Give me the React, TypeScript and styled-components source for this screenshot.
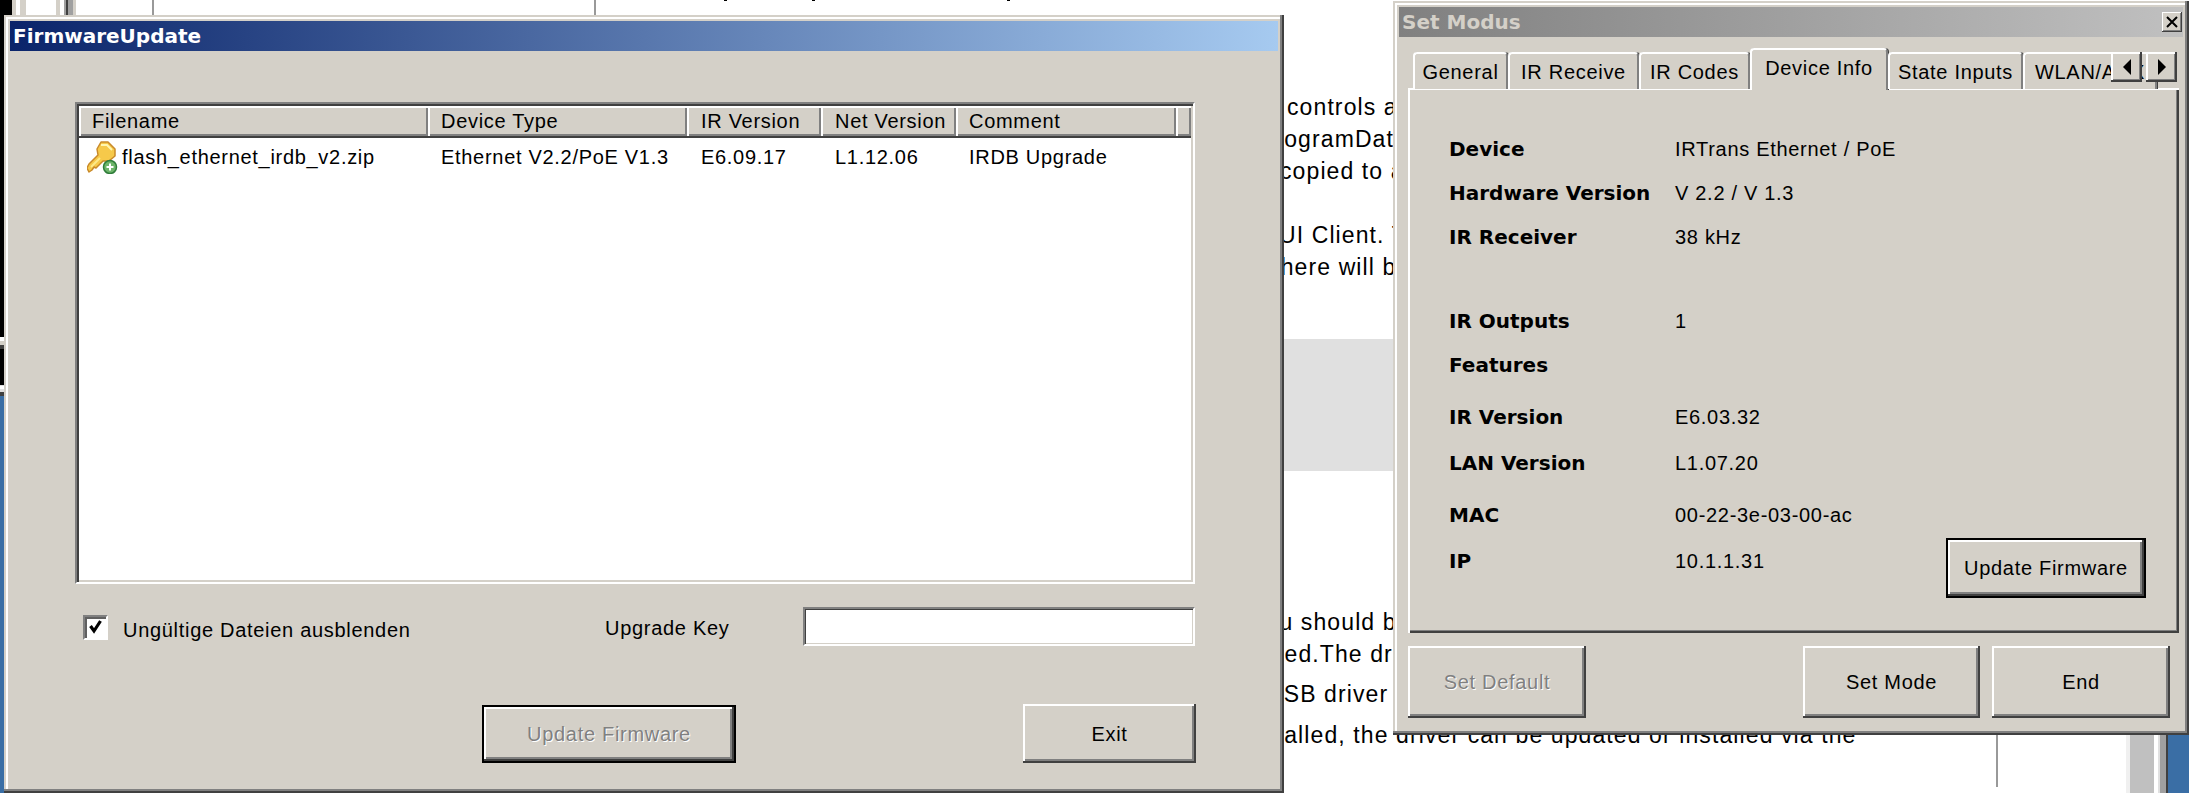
import React from 'react';
import styled, { createGlobalStyle } from 'styled-components';

const FACE = '#d4d0c8';

const GlobalStyle = createGlobalStyle`
  html, body {
    margin: 0;
    padding: 0;
    width: 2189px;
    height: 793px;
    overflow: hidden;
    background: #fff;
  }
  * { box-sizing: border-box; }
`;

const Desktop = styled.div`
  position: relative;
  width: 2189px;
  height: 793px;
  overflow: hidden;
  background: #fff;
  font-family: "Liberation Sans", Arial, sans-serif;
  font-size: 20px;
  letter-spacing: 0.7px;
  color: #000;
`;

// bits of other windows that peek out behind the two dialogs
const BackEdge = styled.div<{ $x: number; $y: number; $w: number; $h: number; $c: string }>`
  position: absolute;
  left: ${p => p.$x}px;
  top: ${p => p.$y}px;
  width: ${p => p.$w}px;
  height: ${p => p.$h}px;
  background: ${p => p.$c};
`;

const Doc = styled.div`
  font-size: 23px;
  letter-spacing: 1.1px;
  padding-top: 91px;
  white-space: nowrap;
`;

const DocLine = styled.div<{ $x: number; $gap?: number }>`
  height: 32px;
  line-height: 32px;
  margin-left: ${p => p.$x}px;
  margin-top: ${p => p.$gap ?? 0}px;
`;

const DocBand = styled.div`
  height: 132px;
  margin-top: 56px;
  background: #e0e0e0;
`;

const Win = styled.div<{ $x: number; $y: number; $w: number; $h: number }>`
  position: absolute;
  left: ${p => p.$x}px;
  top: ${p => p.$y}px;
  width: ${p => p.$w}px;
  height: ${p => p.$h}px;
  background: ${FACE};
  padding: 6px 6px 4px 6px;
  box-shadow:
    inset -2px -2px #404040,
    inset -4px -4px #808080,
    inset 2px 2px ${FACE},
    inset 4px 4px #fff;
`;

const TitleBar = styled.div<{ $active?: boolean }>`
  height: 30px;
  display: flex;
  align-items: center;
  justify-content: space-between;
  padding: 0 1px 0 3px;
  font-family: "DejaVu Sans", sans-serif;
  font-weight: 700;
  font-size: 20px;
  letter-spacing: 0;
  color: ${p => (p.$active ? '#fff' : FACE)};
  background: ${p =>
    p.$active
      ? 'linear-gradient(90deg, #0a246a, #a6caf0)'
      : 'linear-gradient(90deg, #808080, #c0c0c0)'};
`;

const CloseButton = styled.div`
  width: 20px;
  height: 20px;
  background: ${FACE};
  display: flex;
  align-items: center;
  justify-content: center;
  box-shadow: inset -1px -1px #404040, inset 1px 1px #fff, inset -2px -2px #808080;
`;

const FirmwareBody = styled.div`
  padding: 51px 0 0 65px;
`;

const ListView = styled.div`
  width: 1120px;
  height: 482px;
  background: #fff;
  border-style: solid;
  border-width: 2px;
  border-color: #808080 #fff #fff #808080;
  box-shadow: inset 2px 2px #404040, inset -2px -2px ${FACE};
  padding: 2px;
`;

const ListHeader = styled.div`
  display: flex;
  height: 32px;
  border-bottom: 2px solid #404040;
`;

const HeaderCell = styled.div<{ $w?: number; $pad?: number }>`
  flex: ${p => (p.$w ? `0 0 ${p.$w}px` : 1)};
  padding-left: ${p => p.$pad ?? 0}px;
  line-height: 31px;
  white-space: nowrap;
  background: ${FACE};
  box-shadow: inset 2px 2px #fff, inset -2px -2px #808080;
`;

const ListRow = styled.div`
  display: flex;
  height: 38px;
  align-items: center;
`;

const RowCell = styled.div<{ $w: number; $pad: number }>`
  flex: 0 0 ${p => p.$w}px;
  padding-left: ${p => p.$pad}px;
  display: flex;
  align-items: center;
  white-space: nowrap;
`;

const FileName = styled.span`
  margin-left: 4px;
`;

const OptionRow = styled.div`
  display: grid;
  grid-template-columns: 530px 198px 392px;
  align-items: center;
  height: 39px;
  margin-top: 23px;
`;

const CheckGroup = styled.label`
  display: flex;
  align-items: center;
  gap: 15px;
  padding: 1px 0 0 8px;
`;

const CheckLabel = styled.span`
  padding-top: 6px;
`;

const KeyLabel = styled.span`
  padding-top: 4px;
`;

const CheckBox = styled.span`
  width: 25px;
  height: 25px;
  display: flex;
  align-items: center;
  justify-content: center;
  background: #fff;
  border-style: solid;
  border-width: 2px;
  border-color: #808080 #fff #fff #808080;
  box-shadow: inset 2px 2px #606060;
`;

const KeyInput = styled.div`
  height: 39px;
  background: #fff;
  border-style: solid;
  border-width: 2px;
  border-color: #808080 #fff #fff #808080;
  box-shadow: inset 1px 1px #404040, inset -1px -1px ${FACE};
`;

const FirmwareFooter = styled.div`
  display: flex;
  align-items: center;
  gap: 287px;
  margin-top: 58px;
  padding-left: 407px;
`;

const Button = styled.div<{ $w: number; $h: number; $default?: boolean; $disabled?: boolean }>`
  flex: 0 0 ${p => p.$w}px;
  width: ${p => p.$w}px;
  height: ${p => p.$h}px;
  display: flex;
  align-items: center;
  justify-content: center;
  padding-top: 1px;
  background: ${FACE};
  border: ${p => (p.$default ? '2px solid #000' : 'none')};
  box-shadow: inset -2px -2px #404040, inset 2px 2px #fff, inset -4px -4px #808080;
  color: ${p => (p.$disabled ? '#808080' : '#000')};
  text-shadow: ${p => (p.$disabled ? '1px 1px 0 #fff' : 'none')};
`;

const ModeBody = styled.div`
  padding: 0 0 0 9px;
`;

const TabArea = styled.div`
  position: relative;
  width: 771px;
  height: 42px;
  margin-top: 11px;
  z-index: 1;
`;

const TabStrip = styled.div`
  display: flex;
  align-items: flex-end;
  height: 42px;
  padding-left: 5px;
  overflow: hidden;
`;

const Tab = styled.div<{ $w: number; $active?: boolean }>`
  flex: 0 0 ${p => p.$w}px;
  height: ${p => (p.$active ? 42 : 37)}px;
  margin-bottom: ${p => (p.$active ? 0 : 1)}px;
  padding-top: 7px;
  text-align: center;
  white-space: nowrap;
  overflow: hidden;
  background: ${FACE};
  border-radius: 4px 4px 0 0;
  border-top: 2px solid #fff;
  border-left: 2px solid #fff;
  border-right: 2px solid #808080;
  box-shadow: 1px 0 #404040;
`;

const TabScroller = styled.div`
  position: absolute;
  right: 2px;
  top: 4px;
  display: flex;
  gap: 4px;
`;

const ScrollButton = styled.div`
  width: 31px;
  height: 30px;
  display: flex;
  align-items: center;
  justify-content: center;
  background: ${FACE};
  box-shadow: inset -2px -2px #404040, inset 2px 2px #fff, inset -3px -3px #808080;
`;

const TabPanel = styled.div`
  display: flex;
  width: 771px;
  height: 545px;
  margin-top: -2px;
  padding: 49px 0 0 41px;
  box-shadow: inset 2px 2px #fff, inset -2px -2px #404040, inset -3px -3px #808080;
`;

const InfoList = styled.div`
  flex: 1;
`;

const InfoRow = styled.div<{ $gap: number }>`
  display: grid;
  grid-template-columns: 226px 1fr;
  height: 24px;
  line-height: 24px;
  margin-top: ${p => p.$gap}px;
  white-space: nowrap;
`;

const InfoLabel = styled.span`
  font-family: "DejaVu Sans", sans-serif;
  font-weight: 700;
  font-size: 20px;
  letter-spacing: 0;
`;

const PanelButton = styled.div`
  align-self: flex-end;
  margin: 0 33px 35px 0;
`;

const ModeFooter = styled.div`
  display: flex;
  width: 762px;
  margin-top: 13px;
  gap: 12px;
`;

const FooterSpacer = styled.div`
  flex: 1;
`;

const columns = [
  { label: 'Filename', w: 349, pad: 13 },
  { label: 'Device Type', w: 259, pad: 13 },
  { label: 'IR Version', w: 134, pad: 14 },
  { label: 'Net Version', w: 135, pad: 14 },
  { label: 'Comment', w: 220, pad: 13 },
];

const tabs = [
  { label: 'General', w: 95 },
  { label: 'IR Receive', w: 131 },
  { label: 'IR Codes', w: 111 },
  { label: 'Device Info', w: 138, active: true },
  { label: 'State Inputs', w: 135 },
  { label: 'WLAN/AUX', w: 134 },
];

const infoRows = [
  { label: 'Device', value: 'IRTrans Ethernet / PoE', gap: 0 },
  { label: 'Hardware Version', value: 'V 2.2 / V 1.3', gap: 20 },
  { label: 'IR Receiver', value: '38 kHz', gap: 20 },
  { label: 'IR Outputs', value: '1', gap: 60 },
  { label: 'Features', value: '', gap: 20 },
  { label: 'IR Version', value: 'E6.03.32', gap: 28 },
  { label: 'LAN Version', value: 'L1.07.20', gap: 22 },
  { label: 'MAC', value: '00-22-3e-03-00-ac', gap: 28 },
  { label: 'IP', value: '10.1.1.31', gap: 22 },
];

const backEdges = [
  { x: 0, y: 0, w: 4, h: 337, c: '#000' },
  { x: 0, y: 337, w: 4, h: 4, c: '#fff' },
  { x: 0, y: 341, w: 4, h: 4, c: FACE },
  { x: 0, y: 345, w: 4, h: 4, c: '#404040' },
  { x: 0, y: 349, w: 4, h: 36, c: '#000' },
  { x: 0, y: 386, w: 4, h: 3, c: '#fff' },
  { x: 0, y: 392, w: 4, h: 4, c: '#404040' },
  { x: 0, y: 396, w: 4, h: 397, c: '#3a6ea5' },
  { x: 4, y: 0, w: 8, h: 15, c: '#000' },
  { x: 12, y: 0, w: 4, h: 15, c: FACE },
  { x: 20, y: 0, w: 6, h: 15, c: FACE },
  { x: 56, y: 0, w: 4, h: 15, c: FACE },
  { x: 64, y: 0, w: 2, h: 15, c: '#a0a0a0' },
  { x: 66, y: 0, w: 2, h: 15, c: '#404040' },
  { x: 68, y: 0, w: 5, h: 15, c: '#a0a0a0' },
  { x: 73, y: 0, w: 3, h: 15, c: FACE },
  { x: 152, y: 0, w: 2, h: 15, c: '#999' },
  { x: 594, y: 0, w: 2, h: 15, c: '#999' },
  { x: 724, y: 0, w: 3, h: 1, c: '#000' },
  { x: 812, y: 0, w: 3, h: 1, c: '#000' },
  { x: 1007, y: 0, w: 3, h: 1, c: '#000' },
  { x: 1996, y: 735, w: 2, h: 52, c: '#999' },
  { x: 2126, y: 735, w: 4, h: 58, c: '#f0f0f0' },
  { x: 2130, y: 735, w: 24, h: 58, c: '#c0c0c0' },
  { x: 2158, y: 735, w: 2, h: 58, c: '#e0e0e0' },
  { x: 2160, y: 735, w: 6, h: 58, c: '#a0a0a0' },
  { x: 2166, y: 735, w: 2, h: 58, c: '#404040' },
  { x: 2168, y: 735, w: 21, h: 58, c: '#3a6ea5' },
];

const KeyIcon = () => (
  <svg width="31" height="33" viewBox="0 0 31 33" style={{ flex: '0 0 31px', marginLeft: -4 }}>
    <path
      d="M14 1 L21 1 L28 8 L28 15 L22 20 L16 20 L9 27 L7 26 L5 29 L2 31 L0 27 L2 23 L11 14 L10 8 Z"
      fill="#f6c94a"
      stroke="#c98a2a"
      strokeWidth="1.5"
      strokeLinejoin="round"
    />
    <path d="M14 4 L20 4 L25 9" fill="none" stroke="#fff6b0" strokeWidth="2" />
    <path d="M4 26 L13 17" stroke="#fde98a" strokeWidth="2" />
    <circle cx="23" cy="26" r="6.5" fill="#6db56a" stroke="#2f7d3a" strokeWidth="1.5" />
    <path d="M23 22.5 V29.5 M19.5 26 H26.5" stroke="#fff" strokeWidth="2" />
  </svg>
);

const CheckMark = () => (
  <svg width="13" height="14" viewBox="0 0 13 14">
    <path d="M1.5 6 L5 11 L11.5 1" fill="none" stroke="#000" strokeWidth="3.2" />
  </svg>
);

const CloseIcon = () => (
  <svg width="12" height="12" viewBox="0 0 12 12">
    <path d="M1 1 L11 11 M11 1 L1 11" stroke="#000" strokeWidth="2" />
  </svg>
);

const Arrow = ({ dir }: { dir: 'left' | 'right' }) => (
  <svg width="10" height="16" viewBox="0 0 10 16">
    <path d={dir === 'left' ? 'M9 0 V16 L1 8 Z' : 'M1 0 V16 L9 8 Z'} fill="#000" />
  </svg>
);

const App: React.FC = () => {
  return (
    <Desktop>
      <GlobalStyle />
      <Doc>
        <DocLine $x={1287}>controls are</DocLine>
        <DocLine $x={1259}>ProgramData</DocLine>
        <DocLine $x={1280}>copied to a</DocLine>
        <DocLine $x={1260} $gap={32}>GUI Client. The</DocLine>
        <DocLine $x={1263} $gap={0}>where will be</DocLine>
        <DocBand />
        <DocLine $x={1253} $gap={135}>you should be</DocLine>
        <DocLine $x={1218} $gap={0}>installed.The driver</DocLine>
        <DocLine $x={1266} $gap={8}>USB driver</DocLine>
        <DocLine $x={1244} $gap={9}>installed, the driver can be updated or installed via the</DocLine>
      </Doc>
      {backEdges.map((e, i) => (
        <BackEdge key={i} $x={e.x} $y={e.y} $w={e.w} $h={e.h} $c={e.c} />
      ))}

      <Win $x={4} $y={15} $w={1280} $h={778}>
        <TitleBar $active>FirmwareUpdate</TitleBar>
        <FirmwareBody>
          <ListView>
            <ListHeader>
              {columns.map(c => (
                <HeaderCell key={c.label} $w={c.w} $pad={c.pad}>{c.label}</HeaderCell>
              ))}
              <HeaderCell />
            </ListHeader>
            <ListRow>
              <RowCell $w={columns[0].w} $pad={12}>
                <KeyIcon />
                <FileName>flash_ethernet_irdb_v2.zip</FileName>
              </RowCell>
              <RowCell $w={columns[1].w} $pad={13}>Ethernet V2.2/PoE V1.3</RowCell>
              <RowCell $w={columns[2].w} $pad={14}>E6.09.17</RowCell>
              <RowCell $w={columns[3].w} $pad={14}>L1.12.06</RowCell>
              <RowCell $w={columns[4].w} $pad={13}>IRDB Upgrade</RowCell>
            </ListRow>
          </ListView>
          <OptionRow>
            <CheckGroup>
              <CheckBox><CheckMark /></CheckBox>
              <CheckLabel>Ungültige Dateien ausblenden</CheckLabel>
            </CheckGroup>
            <KeyLabel>Upgrade Key</KeyLabel>
            <KeyInput />
          </OptionRow>
          <FirmwareFooter>
            <Button $w={254} $h={58} $default $disabled>Update Firmware</Button>
            <Button $w={173} $h={59}>Exit</Button>
          </FirmwareFooter>
        </FirmwareBody>
      </Win>

      <Win $x={1393} $y={1} $w={796} $h={734}>
        <TitleBar>
          Set Modus
          <CloseButton><CloseIcon /></CloseButton>
        </TitleBar>
        <ModeBody>
          <TabArea>
            <TabStrip>
              {tabs.map(t => (
                <Tab key={t.label} $w={t.w} $active={t.active}>{t.label}</Tab>
              ))}
            </TabStrip>
            <TabScroller>
              <ScrollButton><Arrow dir="left" /></ScrollButton>
              <ScrollButton><Arrow dir="right" /></ScrollButton>
            </TabScroller>
          </TabArea>
          <TabPanel>
            <InfoList>
              {infoRows.map(r => (
                <InfoRow key={r.label} $gap={r.gap}>
                  <InfoLabel>{r.label}</InfoLabel>
                  <span>{r.value}</span>
                </InfoRow>
              ))}
            </InfoList>
            <PanelButton>
              <Button $w={200} $h={60} $default>Update Firmware</Button>
            </PanelButton>
          </TabPanel>
          <ModeFooter>
            <Button $w={178} $h={72} $disabled>Set Default</Button>
            <FooterSpacer />
            <Button $w={177} $h={72}>Set Mode</Button>
            <Button $w={178} $h={72}>End</Button>
          </ModeFooter>
        </ModeBody>
      </Win>
    </Desktop>
  );
};

export default App;
